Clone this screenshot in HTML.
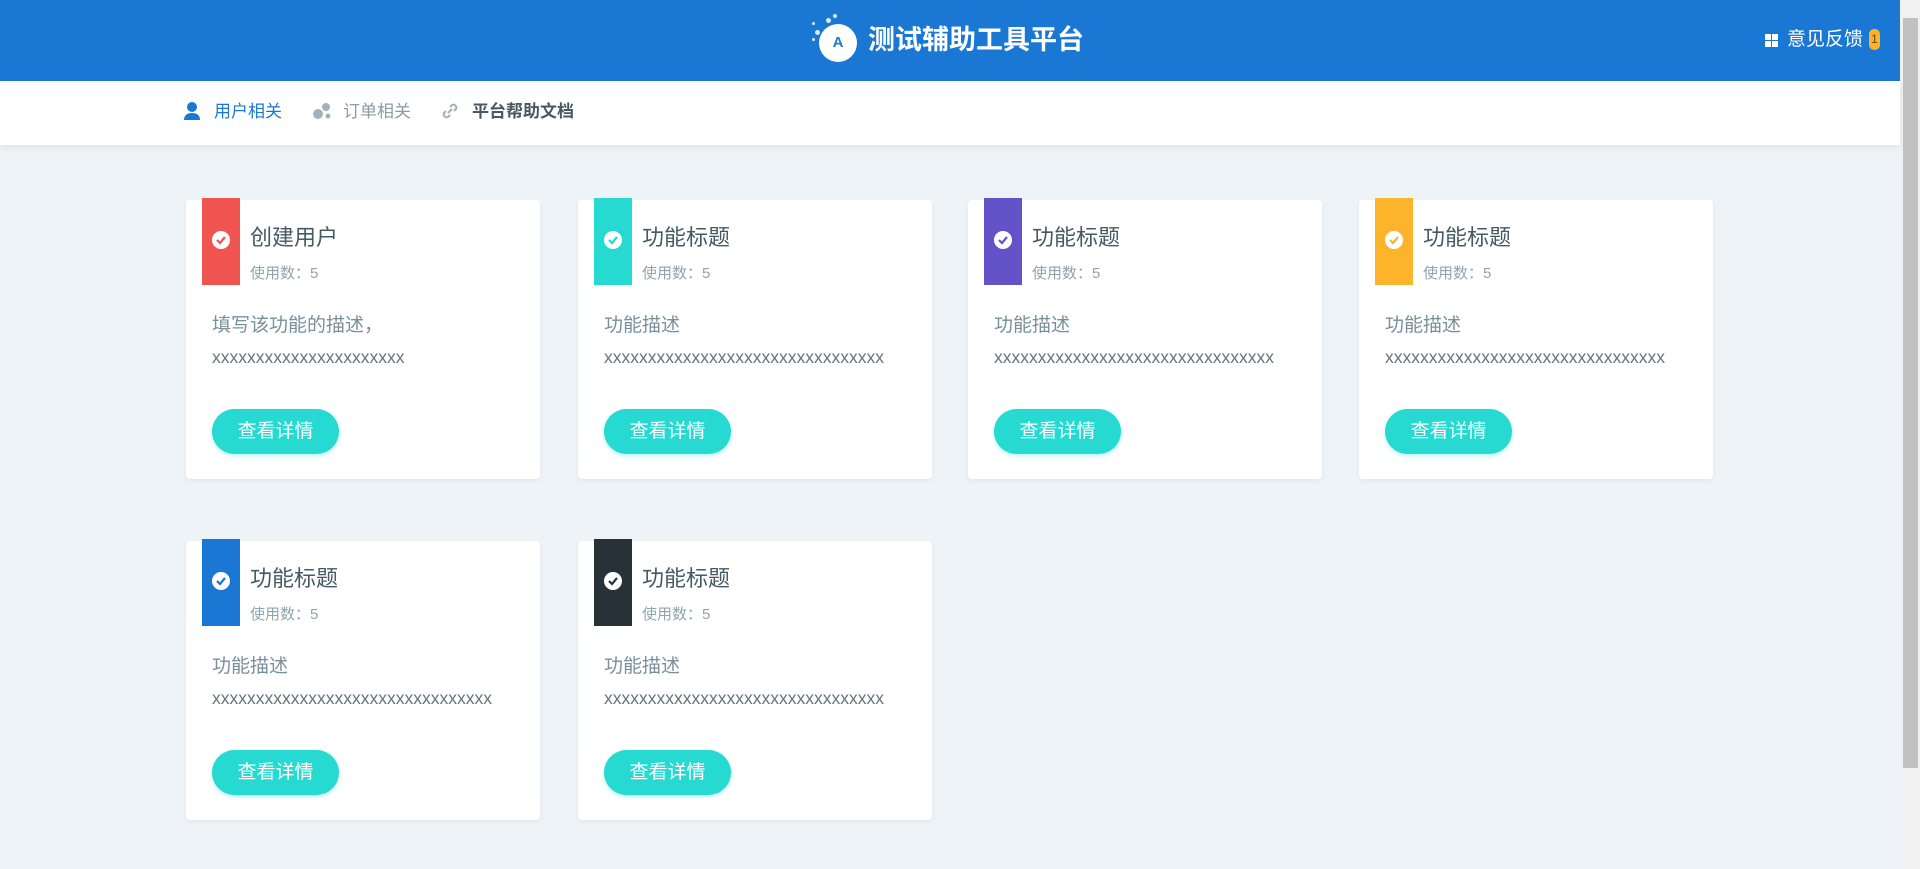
<!DOCTYPE html>
<html><head><meta charset="utf-8"><style>
*{margin:0;padding:0;box-sizing:border-box}
body{width:1920px;height:869px;overflow:hidden;background:#edf3f7;font-family:"Liberation Sans","Noto Sans CJK SC",sans-serif;position:relative}
.hd{position:absolute;left:0;top:0;width:1900px;height:81px;background:#1a78d4}
.title{position:absolute;left:868px;top:22px;font-size:27px;font-weight:bold;color:#fff;line-height:36px}
.logo{position:absolute;width:34px;height:34px;border-radius:50%;background:#fff;color:#1a78d4;font-weight:bold;font-size:15px;text-align:center;line-height:34px}
.dot{position:absolute;background:#fff;border-radius:50%;opacity:.85}
.fb{position:absolute;left:1787px;top:28px;color:#fff;font-size:19px;line-height:24px}
.grid{position:absolute;left:1765px;top:34px;width:13px;height:13px}
.grid i{position:absolute;width:6px;height:6px;background:#fff}
.badge{position:absolute;left:1869px;top:29px;width:11px;height:21px;background:#fbb22a;border-radius:5px;color:#6b4a00;font-size:12px;text-align:center;line-height:21px}
.sb{position:absolute;left:1900px;top:0;width:20px;height:869px;background:#f1f1f1}
.sb .th{position:absolute;left:3px;top:18px;width:15px;height:750px;background:#c1c1c1}
.nav{position:absolute;left:0;top:81px;width:1900px;height:64px;background:#fff;box-shadow:0 3px 8px rgba(0,0,0,.06)}
.ni{position:absolute;top:20px;font-size:17px;line-height:22px}
.card{position:absolute;width:354px;height:279px;background:#fff;border-radius:4px;box-shadow:0 2px 6px rgba(0,0,0,.05)}
.strip{position:absolute;left:16px;top:-2px;width:38px;height:87px}
.chk{position:absolute;left:10px;top:33px;width:18px;height:18px;border-radius:50%;background:#fff}
.ct{position:absolute;left:64px;top:24px;font-size:22px;color:#455a64;line-height:28px}
.cu{position:absolute;left:64px;top:64px;font-size:15px;color:#90a4ae;line-height:20px}
.cd{position:absolute;left:26px;top:114px;font-size:19px;color:#78909c;line-height:24px}
.cx{position:absolute;left:26px;top:146px;font-size:17.5px;color:#67757c;line-height:22px}
.btn{position:absolute;left:26px;top:209px;width:127px;height:45px;border-radius:23px;background:#26dad2;color:#fff;font-size:19px;text-align:center;line-height:45px;box-shadow:0 2px 4px rgba(38,218,210,.3)}
</style></head><body>
<div class="hd">
<span class="dot" style="left:826px;top:18px;width:5px;height:5px"></span>
<span class="dot" style="left:833px;top:14px;width:4px;height:4px"></span>
<span class="dot" style="left:812px;top:22px;width:3px;height:3px"></span>
<span class="dot" style="left:815px;top:30px;width:5px;height:5px"></span>
<span class="dot" style="left:812px;top:38px;width:3px;height:3px"></span>
<div class="logo" style="left:819px;top:24px;width:38px;height:38px;line-height:38px">A</div>
<div class="title">测试辅助工具平台</div>
<div class="grid"><i style="left:0;top:0"></i><i style="left:7px;top:0"></i><i style="left:0;top:7px"></i><i style="left:7px;top:7px"></i></div>
<div class="fb">意见反馈</div>
<div class="badge">1</div>
</div>
<div class="sb"><div class="th"></div></div>
<div class="nav">
<svg style="position:absolute;left:183px;top:20px" width="18" height="20" viewBox="0 0 18 20"><circle cx="9" cy="6" r="5" fill="#1a78d4"/><path d="M1 19c0-5 3.5-7 8-7s8 2 8 7z" fill="#1a78d4"/></svg>
<div class="ni" style="left:214px;color:#1a78d4">用户相关</div>
<svg style="position:absolute;left:312px;top:20px" width="20" height="20" viewBox="0 0 20 20"><circle cx="6" cy="13" r="5" fill="#a3b1ba"/><circle cx="14" cy="6" r="4" fill="#a3b1ba"/><circle cx="16" cy="15" r="2.5" fill="#a3b1ba"/></svg>
<div class="ni" style="left:343px;color:#8d9ba4">订单相关</div>
<svg style="position:absolute;left:440px;top:20px" width="20" height="20" viewBox="0 0 20 20" fill="none" stroke="#a3b1ba" stroke-width="2"><path d="M8 12l4-4M6 10l-2 2a3 3 0 004 4l2-2M14 10l2-2a3 3 0 00-4-4l-2 2"/></svg>
<div class="ni" style="left:472px;color:#455a64;font-weight:bold">平台帮助文档</div>
</div>

<div class="card" style="left:186px;top:200px"><div class="strip" style="background:#f05451"><div class="chk"><svg width="18" height="18"><path d="M5 9l3 3 5-6" stroke="#f05451" stroke-width="2.2" fill="none"/></svg></div></div><div class="ct">创建用户</div><div class="cu">使用数：5</div><div class="cd">填写该功能的描述，</div><div class="cx">xxxxxxxxxxxxxxxxxxxxxx</div><div class="btn">查看详情</div></div>
<div class="card" style="left:578px;top:200px"><div class="strip" style="background:#26dad2"><div class="chk"><svg width="18" height="18"><path d="M5 9l3 3 5-6" stroke="#26dad2" stroke-width="2.2" fill="none"/></svg></div></div><div class="ct">功能标题</div><div class="cu">使用数：5</div><div class="cd">功能描述</div><div class="cx">xxxxxxxxxxxxxxxxxxxxxxxxxxxxxxxx</div><div class="btn">查看详情</div></div>
<div class="card" style="left:968px;top:200px"><div class="strip" style="background:#6352c8"><div class="chk"><svg width="18" height="18"><path d="M5 9l3 3 5-6" stroke="#6352c8" stroke-width="2.2" fill="none"/></svg></div></div><div class="ct">功能标题</div><div class="cu">使用数：5</div><div class="cd">功能描述</div><div class="cx">xxxxxxxxxxxxxxxxxxxxxxxxxxxxxxxx</div><div class="btn">查看详情</div></div>
<div class="card" style="left:1359px;top:200px"><div class="strip" style="background:#fdb32a"><div class="chk"><svg width="18" height="18"><path d="M5 9l3 3 5-6" stroke="#fdb32a" stroke-width="2.2" fill="none"/></svg></div></div><div class="ct">功能标题</div><div class="cu">使用数：5</div><div class="cd">功能描述</div><div class="cx">xxxxxxxxxxxxxxxxxxxxxxxxxxxxxxxx</div><div class="btn">查看详情</div></div>
<div class="card" style="left:186px;top:541px"><div class="strip" style="background:#1a78d4"><div class="chk"><svg width="18" height="18"><path d="M5 9l3 3 5-6" stroke="#1a78d4" stroke-width="2.2" fill="none"/></svg></div></div><div class="ct">功能标题</div><div class="cu">使用数：5</div><div class="cd">功能描述</div><div class="cx">xxxxxxxxxxxxxxxxxxxxxxxxxxxxxxxx</div><div class="btn">查看详情</div></div>
<div class="card" style="left:578px;top:541px"><div class="strip" style="background:#263238"><div class="chk"><svg width="18" height="18"><path d="M5 9l3 3 5-6" stroke="#263238" stroke-width="2.2" fill="none"/></svg></div></div><div class="ct">功能标题</div><div class="cu">使用数：5</div><div class="cd">功能描述</div><div class="cx">xxxxxxxxxxxxxxxxxxxxxxxxxxxxxxxx</div><div class="btn">查看详情</div></div>
</body></html>
